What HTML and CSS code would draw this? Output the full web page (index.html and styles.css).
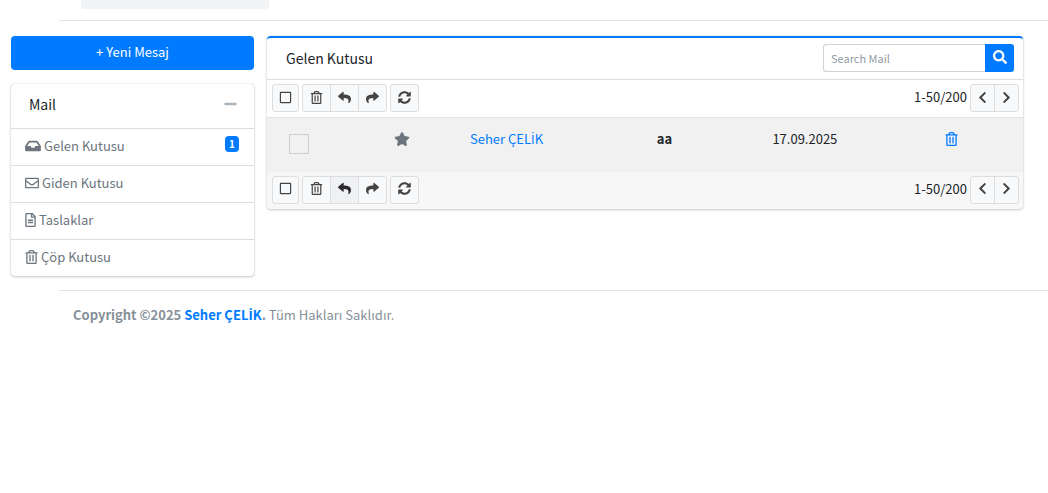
FILE: index.html
```html
<!DOCTYPE html>
<html lang="tr">
<head>
<meta charset="utf-8">
<meta name="viewport" content="width=device-width, initial-scale=1">
<title>Gelen Kutusu</title>
<link rel="stylesheet" href="styles.css">
</head>
<body>
<svg class="sprite" aria-hidden="true">
  <symbol id="trash" viewBox="0 0 448 512"><path d="M268 416h24a12 12 0 0 0 12-12V188a12 12 0 0 0-12-12h-24a12 12 0 0 0-12 12v216a12 12 0 0 0 12 12zM432 80h-82.41l-34-56.7A48 48 0 0 0 274.41 0H173.59a48 48 0 0 0-41.16 23.3L98.41 80H16A16 16 0 0 0 0 96v16a16 16 0 0 0 16 16h16v336a48 48 0 0 0 48 48h288a48 48 0 0 0 48-48V128h16a16 16 0 0 0 16-16V96a16 16 0 0 0-16-16zM171.84 50.91A6 6 0 0 1 177 48h94a6 6 0 0 1 5.15 2.91L293.61 80H154.39zM368 464H80V128h288zm-212-48h24a12 12 0 0 0 12-12V188a12 12 0 0 0-12-12h-24a12 12 0 0 0-12 12v216a12 12 0 0 0 12 12z"/></symbol>
  <symbol id="square" viewBox="0 0 448 512"><path d="M400 32H48C21.5 32 0 53.5 0 80v352c0 26.5 21.5 48 48 48h352c26.5 0 48-21.5 48-48V80c0-26.5-21.5-48-48-48zm-6 400H54c-3.3 0-6-2.7-6-6V86c0-3.3 2.7-6 6-6h340c3.3 0 6 2.7 6 6v340c0 3.3-2.7 6-6 6z"/></symbol>
  <symbol id="reply" viewBox="0 0 512 512"><path d="M8.309 189.836L184.313 37.851C199.719 24.546 224 35.347 224 56.015v80.053c160.629 1.839 288 34.032 288 186.258 0 61.441-39.581 122.309-83.333 154.132-13.653 9.931-33.111-2.533-28.077-18.631 45.344-145.012-21.507-183.51-176.59-185.742V360c0 20.7-24.3 31.453-39.687 18.164l-176.004-152c-11.071-9.562-11.086-26.753 0-36.328z"/></symbol>
  <symbol id="share" viewBox="0 0 512 512"><path transform="matrix(-1 0 0 1 512 0)" d="M8.309 189.836L184.313 37.851C199.719 24.546 224 35.347 224 56.015v80.053c160.629 1.839 288 34.032 288 186.258 0 61.441-39.581 122.309-83.333 154.132-13.653 9.931-33.111-2.533-28.077-18.631 45.344-145.012-21.507-183.51-176.59-185.742V360c0 20.7-24.3 31.453-39.687 18.164l-176.004-152c-11.071-9.562-11.086-26.753 0-36.328z"/></symbol>
  <symbol id="sync" viewBox="0 0 512 512"><path d="M370.72 133.28C339.458 104.008 298.888 87.962 255.848 88c-77.458.068-144.328 53.178-162.791 126.85-1.344 5.363-6.122 9.15-11.651 9.15H24.103c-7.498 0-13.194-6.807-11.807-14.176C33.933 94.924 134.813 8 256 8c66.448 0 126.791 26.136 171.315 68.685L463.03 40.97C478.149 25.851 504 36.559 504 57.941V192c0 13.255-10.745 24-24 24H345.941c-21.382 0-32.09-25.851-16.971-40.971l41.75-41.749zM32 296h134.059c21.382 0 32.09 25.851 16.971 40.971l-41.75 41.75c31.262 29.273 71.835 45.319 114.876 45.28 77.418-.07 144.315-53.144 162.787-126.849 1.344-5.363 6.122-9.15 11.651-9.15h57.304c7.498 0 13.194 6.807 11.807 14.176C478.067 417.076 377.187 504 256 504c-66.448 0-126.791-26.136-171.315-68.685L48.97 471.03C33.851 486.149 8 475.441 8 454.059V320c0-13.255 10.745-24 24-24z"/></symbol>
  <symbol id="left" viewBox="0 0 320 512"><path d="M34.52 239.03L228.87 44.69c9.37-9.37 24.57-9.37 33.94 0l22.67 22.67c9.36 9.36 9.37 24.52.04 33.9L131.49 256l154.02 154.75c9.34 9.38 9.32 24.54-.04 33.9l-22.67 22.67c-9.37 9.37-24.57 9.37-33.94 0L34.52 272.97c-9.37-9.37-9.37-24.57 0-33.94z"/></symbol>
  <symbol id="right" viewBox="0 0 320 512"><path transform="matrix(-1 0 0 1 320 0)" d="M34.52 239.03L228.87 44.69c9.37-9.37 24.57-9.37 33.94 0l22.67 22.67c9.36 9.36 9.37 24.52.04 33.9L131.49 256l154.02 154.75c9.34 9.38 9.32 24.54-.04 33.9l-22.67 22.67c-9.37 9.37-24.57 9.37-33.94 0L34.52 272.97c-9.37-9.37-9.37-24.57 0-33.94z"/></symbol>
  <symbol id="star" viewBox="0 0 576 512"><path d="M259.3 17.8L194 150.2 47.9 171.5c-26.2 3.8-36.7 36.1-17.7 54.6l105.7 103-25 145.5c-4.5 26.3 23.2 46 46.4 33.7L288 439.6l130.7 68.7c23.2 12.2 50.9-7.4 46.4-33.7l-25-145.5 105.7-103c19-18.5 8.5-50.8-17.7-54.6L382 150.2 316.7 17.8c-11.7-23.6-45.6-23.9-57.4 0z"/></symbol>
  <symbol id="search" viewBox="0 0 512 512"><path d="M505 442.7L405.3 343c-4.5-4.5-10.6-7-17-7H372c27.6-35.3 44-79.7 44-128C416 93.1 322.9 0 208 0S0 93.1 0 208s93.1 208 208 208c48.3 0 92.7-16.4 128-44v16.3c0 6.4 2.5 12.5 7 17l99.7 99.7c9.4 9.4 24.6 9.4 33.9 0l28.3-28.3c9.4-9.4 9.4-24.6.1-34zM208 336c-70.7 0-128-57.2-128-128 0-70.7 57.2-128 128-128 70.7 0 128 57.2 128 128 0 70.7-57.2 128-128 128z"/></symbol>
  <symbol id="inbox" viewBox="0 0 576 512"><path d="M567.938 243.908L462.25 85.374A48.003 48.003 0 0 0 422.311 64H153.689a48 48 0 0 0-39.938 21.374L8.062 243.908A47.994 47.994 0 0 0 0 270.533V400c0 26.51 21.49 48 48 48h480c26.51 0 48-21.49 48-48V270.533a47.994 47.994 0 0 0-8.062-26.625zM162.252 128h251.497l85.333 128H376l-32 64H232l-32-64H76.918l85.334-128z"/></symbol>
  <symbol id="envelope" viewBox="0 0 512 512"><path d="M464 64H48C21.49 64 0 85.49 0 112v288c0 26.51 21.49 48 48 48h416c26.51 0 48-21.49 48-48V112c0-26.51-21.49-48-48-48zm0 48v40.805c-22.422 18.259-58.168 46.651-134.587 106.49-16.841 13.247-50.201 45.072-73.413 44.701-23.208.375-56.579-31.459-73.413-44.701C106.18 199.465 70.425 171.067 48 152.805V112h416zM48 400V214.398c22.914 18.251 55.409 43.862 104.938 82.646 21.857 17.205 60.134 55.186 103.062 54.955 42.717.231 80.509-37.199 103.053-54.947 49.528-38.783 82.032-64.401 104.947-82.653V400H48z"/></symbol>
  <symbol id="file" viewBox="0 0 384 512"><path d="M288 248v28c0 6.6-5.4 12-12 12H108c-6.6 0-12-5.4-12-12v-28c0-6.6 5.4-12 12-12h168c6.6 0 12 5.4 12 12zm-12 72H108c-6.6 0-12 5.4-12 12v28c0 6.6 5.4 12 12 12h168c6.6 0 12-5.4 12-12v-28c0-6.6-5.4-12-12-12zm108-188.1V464c0 26.5-21.5 48-48 48H48c-26.5 0-48-21.5-48-48V48C0 21.5 21.5 0 48 0h204.1C264.8 0 277 5.1 286 14.1L369.9 98c9 8.9 14.1 21.2 14.1 33.9zm-128-80V128h76.1L256 51.9zM336 464V176H232c-13.3 0-24-10.7-24-24V48H48v416h288z"/></symbol>
  <symbol id="minus" viewBox="0 0 448 512"><path d="M416 208H32c-17.67 0-32 14.33-32 32v32c0 17.67 14.33 32 32 32h384c17.67 0 32-14.33 32-32v-32c0-17.67-14.33-32-32-32z"/></symbol>
</svg>

<header class="topbar"><div class="topbar-field"></div></header>

<main class="content">
  <aside class="side">
    <button class="compose" type="button">+ Yeni Mesaj</button>
    <section class="card">
      <div class="folders-header">
        <h2 class="card-title">Mail</h2>
        <button class="collapse" type="button" aria-label="Daralt"><svg class="icon w-13"><use href="#minus"/></svg></button>
      </div>
      <nav class="folders">
        <a class="folder" href="#"><svg class="icon w-16"><use href="#inbox"/></svg>Gelen Kutusu<span class="badge">1</span></a>
        <a class="folder" href="#"><svg class="icon w-14"><use href="#envelope"/></svg>Giden Kutusu</a>
        <a class="folder" href="#"><svg class="icon w-11"><use href="#file"/></svg>Taslaklar</a>
        <a class="folder" href="#"><svg class="icon w-13"><use href="#trash"/></svg>Çöp Kutusu</a>
      </nav>
    </section>
  </aside>

  <section class="card mailbox">
    <div class="mailbox-header">
      <h1 class="card-title">Gelen Kutusu</h1>
      <form class="search">
        <input class="search-input" type="text" placeholder="Search Mail" aria-label="Search Mail">
        <button class="search-button" type="button" aria-label="Ara"><svg class="icon w-14"><use href="#search"/></svg></button>
      </form>
    </div>
    <div class="toolbar">
      <button class="tool select-all" type="button" aria-label="Tümünü seç"><svg class="icon tool-icon"><use href="#square"/></svg></button>
      <div class="group">
        <button class="tool" type="button" aria-label="Sil"><svg class="icon tool-icon"><use href="#trash"/></svg></button>
        <button class="tool" type="button" aria-label="Yanıtla"><svg class="icon tool-icon"><use href="#reply"/></svg></button>
        <button class="tool" type="button" aria-label="İlet"><svg class="icon tool-icon"><use href="#share"/></svg></button>
      </div>
      <button class="tool" type="button" aria-label="Yenile"><svg class="icon tool-icon"><use href="#sync"/></svg></button>
      <div class="pager">
        <span>1-50/200</span>
        <div class="group">
          <button class="tool page" type="button" aria-label="Önceki"><svg class="icon tool-icon"><use href="#left"/></svg></button>
          <button class="tool page" type="button" aria-label="Sonraki"><svg class="icon tool-icon"><use href="#right"/></svg></button>
        </div>
      </div>
    </div>
    <table class="messages">
      <colgroup><col class="col-check"><col class="col-star"><col class="col-name"><col class="col-subject"><col class="col-date"><col class="col-delete"></colgroup>
      <tbody>
        <tr>
          <td class="check-cell"><input class="check" type="checkbox" aria-label="Mesajı seç"></td>
          <td><svg class="icon w-16 star"><use href="#star"/></svg></td>
          <td><a class="link" href="#">Seher ÇEL<span class="dotted">İ</span>K</a></td>
          <td><b>aa</b></td>
          <td>17.09.2025</td>
          <td><a class="link" href="#" aria-label="Sil"><svg class="icon w-13"><use href="#trash"/></svg></a></td>
        </tr>
      </tbody>
    </table>
    <div class="toolbar toolbar-bottom">
      <button class="tool select-all" type="button" aria-label="Tümünü seç"><svg class="icon tool-icon"><use href="#square"/></svg></button>
      <div class="group">
        <button class="tool" type="button" aria-label="Sil"><svg class="icon tool-icon"><use href="#trash"/></svg></button>
        <button class="tool active" type="button" aria-label="Yanıtla"><svg class="icon tool-icon"><use href="#reply"/></svg></button>
        <button class="tool" type="button" aria-label="İlet"><svg class="icon tool-icon"><use href="#share"/></svg></button>
      </div>
      <button class="tool" type="button" aria-label="Yenile"><svg class="icon tool-icon"><use href="#sync"/></svg></button>
      <div class="pager">
        <span>1-50/200</span>
        <div class="group">
          <button class="tool page" type="button" aria-label="Önceki"><svg class="icon tool-icon"><use href="#left"/></svg></button>
          <button class="tool page" type="button" aria-label="Sonraki"><svg class="icon tool-icon"><use href="#right"/></svg></button>
        </div>
      </div>
    </div>
  </section>
</main>

<footer class="footer"><b>Copyright ©2025 <a class="link" href="#">Seher ÇEL<span class="dotted">İ</span>K</a>.</b> Tüm Hakları Saklıdır.</footer>
</body>
</html>
```
FILE: styles.css
```css
* { box-sizing: border-box; }

body {
  margin: 0;
  background: #fff;
  color: #212529;
  font-family: "Source Sans Pro", "Noto Sans CJK SC", sans-serif;
  font-size: 13px;
  line-height: 22px;
}

button, input { font: inherit; margin: 0; }
.sprite { display: none; }

.icon {
  display: block;
  flex: none;
  height: 14px;
  fill: currentColor;
}
.w-11 { width: 11px; }
.w-13 { width: 13px; }
.w-14 { width: 14px; }
.w-16 { width: 16px; }

.link { color: #007bff; text-decoration: none; }

.dotted { font-family: "Open Sans", sans-serif; line-height: 1; }

.topbar {
  height: 21px;
  margin-left: 59px;
  padding-left: 22px;
  border-bottom: 1px solid #dee2e6;
}
.topbar-field {
  width: 188px;
  height: 9px;
  border-radius: 0 0 3px 3px;
  background: #f2f4f6;
}

.content {
  display: grid;
  grid-template-columns: 9fr 28fr;
  align-items: start;
  gap: 13px;
  padding: 15px 25px 14px 11px;
}

.side { display: grid; gap: 14px; }

.compose {
  height: 34px;
  padding: 0 10px 2px;
  border: 0;
  border-radius: 4px;
  background: #007bff;
  color: #fff;
}

.card {
  border-radius: 4px;
  background: #fff;
  box-shadow: 0 0 1px rgba(0, 0, 0, .25), 0 1px 3px rgba(0, 0, 0, .2);
}
.card-title {
  margin: 0;
  font-size: 14px;
  font-weight: 400;
}

.folders-header {
  display: flex;
  align-items: center;
  justify-content: space-between;
  height: 44px;
  padding: 0 17px 4px 18px;
}
.collapse {
  padding: 0;
  border: 0;
  background: none;
  color: #adb5bd;
}
.folder {
  display: flex;
  align-items: center;
  gap: 3px;
  height: 37px;
  padding: 0 15px 2px 14px;
  border-top: 1px solid #dcdddf;
  color: #6c757d;
  text-decoration: none;
}
.badge {
  margin: 0 0 4px auto;
  padding: 0 4px;
  border-radius: 4px;
  background: #007bff;
  color: #fff;
  font-size: 10px;
  font-weight: 700;
  line-height: 16px;
}

.mailbox { border-top: 2px solid #007bff; overflow: hidden; }
.mailbox-header {
  display: flex;
  align-items: center;
  justify-content: space-between;
  height: 42px;
  padding: 0 9px 1px 19px;
  border-bottom: 1px solid #dcdddf;
}
.search { display: flex; width: 191px; }
.search-input {
  flex: 1;
  min-width: 0;
  height: 28px;
  padding: 0 7px;
  border: 1px solid #ced4da;
  border-right: 0;
  border-radius: 3px 0 0 3px;
  outline: 0;
  font-size: 11px;
}
.search-input::placeholder { color: #939ba2; }
.search-button {
  display: grid;
  place-items: center;
  width: 29px;
  padding: 0 0 2px;
  border: 0;
  border-radius: 0 3px 3px 0;
  background: #007bff;
  color: #fff;
}

.toolbar {
  display: flex;
  align-items: center;
  gap: 3px;
  padding: 4px 4px 5px 5px;
}
.toolbar-bottom { background: #f7f7f7; }
.group { display: flex; }
.tool {
  display: grid;
  place-items: center;
  width: 29px;
  height: 28px;
  padding: 0 0 2px;
  border: 1px solid #ddd;
  border-radius: 3px;
  background: #f8f9fa;
  color: #444;
}
.select-all { width: 27px; }
.page { width: 25px; }
.group .tool + .tool { margin-left: -1px; border-top-left-radius: 0; border-bottom-left-radius: 0; }
.group .tool:not(:last-child) { border-top-right-radius: 0; border-bottom-right-radius: 0; }
.active { background: #eff1f4; color: #2b2b2b; }
.tool-icon { width: 13px; height: 13px; }
.pager {
  display: flex;
  align-items: center;
  gap: 3px;
  margin-left: auto;
}
.pager span { padding-bottom: 2px; }

.messages {
  width: 100%;
  table-layout: fixed;
  border-collapse: collapse;
  background: #f1f1f1;
}
.messages td {
  height: 54px;
  padding: 10px 11px 0;
  border-top: 1px solid #dee2e6;
  vertical-align: top;
}
.messages .icon { margin-top: 4px; }
.col-check { width: 15.3%; }
.col-star { width: 10.1%; }
.col-name { width: 24.7%; }
.col-subject { width: 15.3%; }
.col-date { width: 22.8%; }
.star { color: #6c757d; }
.messages .check-cell { padding: 16px 22px 0; }
.check {
  display: block;
  appearance: none;
  width: 20px;
  height: 20px;
  margin: 0;
  border: 1px solid #d0ccc7;
}

.footer {
  margin-left: 59px;
  padding: 13px 14px;
  border-top: 1px solid #dee2e6;
  color: #869099;
}
```
